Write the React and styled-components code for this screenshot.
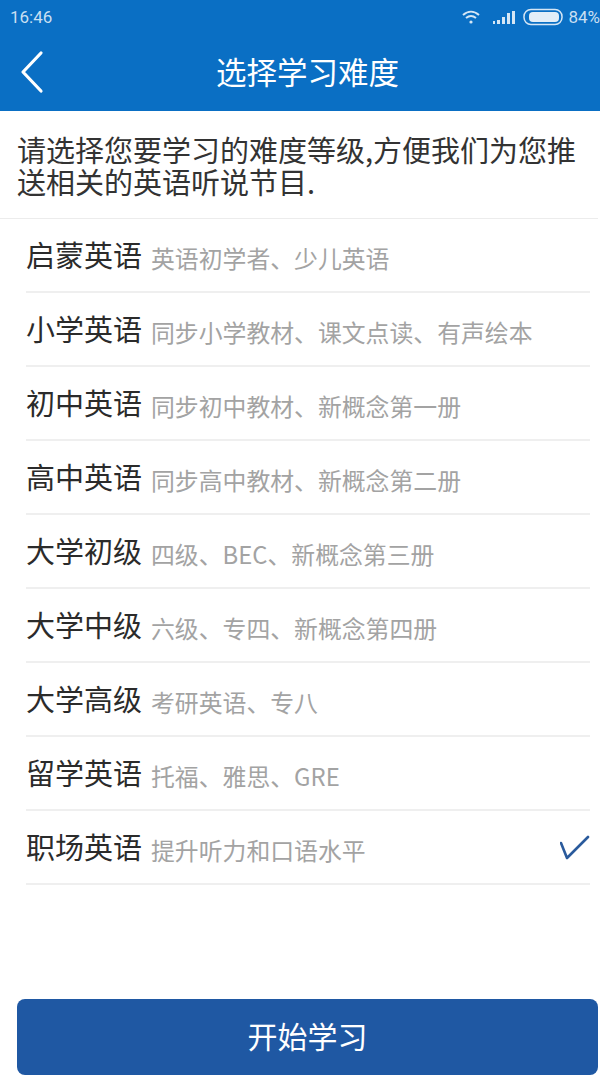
import React from 'react';
import styled, { createGlobalStyle } from 'styled-components';

const GlobalStyle = createGlobalStyle`
  html, body {
    margin: 0;
    padding: 0;
    background: #fff;
  }
`;

const Page = styled.div`
  width: 600px;
  height: 1080px;
  display: flex;
  flex-direction: column;
  overflow: hidden;
  background: #fff;
  font-family: "Noto Sans CJK SC", "Noto Sans", sans-serif;
`;

const Header = styled.header`
  height: 111px;
  flex: none;
  background: #0a6fc4;
  color: #fff;
`;

const StatusBar = styled.div`
  height: 34px;
  display: flex;
  align-items: center;
  justify-content: space-between;
  padding: 0 0 0 10px;
  color: #c9dff2;
  font-family: Roboto, sans-serif;
  font-size: 17px;
`;

const StatusIcons = styled.div`
  display: flex;
  align-items: center;
  white-space: nowrap;
`;

const Battery = styled.svg`
  margin: 0 5px 0 8px;
`;

const Signal = styled.svg`
  margin-left: 12px;
`;

const NavBar = styled.div`
  height: 77px;
  display: flex;
  align-items: center;
  justify-content: center;
  position: relative;
`;

const BackIcon = styled.svg`
  position: absolute;
  left: 20px;
  top: 16px;
`;

const Title = styled.h1`
  margin: 0 0 4px 15px;
  font-size: 30.5px;
  font-weight: 400;
  line-height: 40px;
`;

const Intro = styled.p`
  margin: 0 2px 0 0;
  padding: 22px 16px 0 17px;
  height: 108px;
  box-sizing: border-box;
  border-bottom: 1px solid #ececec;
  font-size: 29px;
  line-height: 32px;
  color: #333;
`;

const List = styled.ul`
  list-style: none;
  margin: 0 10px 0 26px;
  padding: 0;
  flex: 1;
`;

const Row = styled.li`
  height: 74px;
  box-sizing: border-box;
  display: flex;
  align-items: center;
  border-bottom: 2px solid #efefef;
`;

const RowName = styled.span`
  font-size: 29px;
  color: #2b2b2b;
  line-height: 40px;
  margin-right: 9px;
  margin-top: -2px;
`;

const RowDesc = styled.span`
  flex: 1;
  font-size: 23.85px;
  color: #a3a3a3;
  line-height: 32px;
  margin-top: 6px;
`;

const Check = styled.svg`
  flex: none;
`;

const StartButton = styled.button`
  display: block;
  flex: none;
  width: 581px;
  height: 76px;
  margin: 0 2px 5px 17px;
  padding: 0 0 4px;
  border: none;
  border-radius: 8px;
  background: #1f58a3;
  color: #fff;
  font-family: inherit;
  font-size: 30px;
`;

const levels = [
  ['启蒙英语', '英语初学者、少儿英语'],
  ['小学英语', '同步小学教材、课文点读、有声绘本'],
  ['初中英语', '同步初中教材、新概念第一册'],
  ['高中英语', '同步高中教材、新概念第二册'],
  ['大学初级', '四级、BEC、新概念第三册'],
  ['大学中级', '六级、专四、新概念第四册'],
  ['大学高级', '考研英语、专八'],
  ['留学英语', '托福、雅思、GRE'],
  ['职场英语', '提升听力和口语水平', true],
];

export default function App() {
  return (
    <Page>
      <GlobalStyle />
      <Header>
        <StatusBar>
          <span>16:46</span>
          <StatusIcons>
            <svg width="20" height="16" viewBox="0 0 20 16" fill="none" stroke="#d5e6f5" strokeWidth="2">
              <path d="M2 6 C7 1.5 13 1.5 18 6" />
              <path d="M5 9 C8 6.5 12 6.5 15 9" />
              <circle cx="10" cy="13" r="1.6" fill="#d5e6f5" stroke="none" />
            </svg>
            <Signal width="22" height="14" viewBox="0 0 22 14" fill="#d5e6f5">
              <rect x="0" y="11" width="2" height="3" />
              <rect x="4" y="10" width="3" height="4" />
              <rect x="9" y="7" width="3" height="7" />
              <rect x="14" y="3" width="3" height="11" />
              <rect x="19" y="1" width="3" height="13" />
            </Signal>
            <Battery width="40" height="18" viewBox="0 0 40 18" fill="none">
              <rect x="1" y="1.5" width="38" height="15" rx="7" stroke="#d5e6f5" strokeWidth="1.5" />
              <rect x="6" y="4" width="30" height="10" rx="4" fill="#e2eef8" />
            </Battery>
            <span>84%</span>
          </StatusIcons>
        </StatusBar>
        <NavBar>
          <BackIcon width="26" height="44" viewBox="0 0 26 44" fill="none" stroke="#fff" strokeWidth="3.2" strokeLinecap="round" strokeLinejoin="round">
            <path d="M21 3 L3 22 L21 41" />
          </BackIcon>
          <Title>选择学习难度</Title>
        </NavBar>
      </Header>
      <Intro>请选择您要学习的难度等级,方便我们为您推送相关的英语听说节目.</Intro>
      <List>
        {levels.map(([name, desc, selected]) => (
          <Row key={name}>
            <RowName>{name}</RowName>
            <RowDesc>{desc}</RowDesc>
            {selected && (
              <Check width="30" height="26" viewBox="0 0 30 26" fill="none" stroke="#2a5a9c" strokeWidth="2.6" strokeLinecap="round" strokeLinejoin="round">
                <path d="M1 9 L7 24 L28 3" />
              </Check>
            )}
          </Row>
        ))}
      </List>
      <StartButton>开始学习</StartButton>
    </Page>
  );
}
